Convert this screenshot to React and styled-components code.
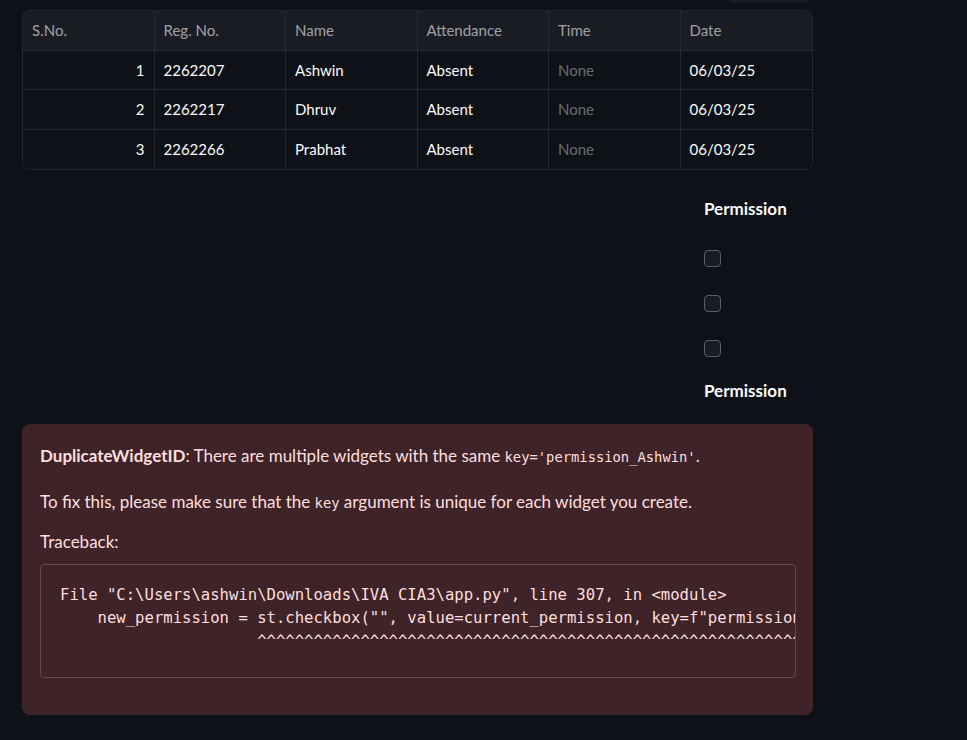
import React from "react";
import styled, { createGlobalStyle } from "styled-components";

const Global = createGlobalStyle`
  html, body { margin: 0; padding: 0; background: #0e1117; }
  body { font-family: Lato, "Noto Sans", sans-serif; color: #fafafa; }
`;

const Page = styled.div`
  width: 967px;
  height: 740px;
  overflow: hidden;
  background: #0e1117;
  padding: 10px 0 0 22px;
  box-sizing: border-box;
`;

const Main = styled.div`
  width: 791px;
  display: flex;
  flex-direction: column;
`;

const TableWrap = styled.div`
  position: relative;
`;

const Toolbar = styled.div`
  position: absolute;
  top: -37px;
  right: 2px;
  width: 85px;
  height: 30px;
  border-radius: 8px;
  background: #1a1c24;
`;

const Table = styled.div`
  display: grid;
  grid-template-columns: repeat(6, 1fr);
  grid-auto-rows: 39.5px;
  border: 1px solid #262730;
  border-radius: 8px;
  overflow: hidden;
  box-sizing: border-box;
  font-family: Lato, "Noto Sans", sans-serif;
  font-size: 15px;
`;

const Cell = styled.div`
  display: flex;
  align-items: center;
  justify-content: ${(p) => (p.$right ? "flex-end" : "flex-start")};
  padding: 0 9px;
  box-sizing: border-box;
  background: ${(p) => (p.$head ? "#1a1c24" : "#0e1117")};
  color: ${(p) =>
    p.$head ? "rgba(250,250,250,0.6)" : p.$muted ? "rgba(250,250,250,0.4)" : "#fafafa"};
  border-right: ${(p) => (p.$last ? "none" : "1px solid #262730")};
  border-bottom: ${(p) => (p.$bottom ? "none" : "1px solid #262730")};
`;

const PermRow = styled.div`
  display: flex;
  justify-content: flex-end;
  margin-top: 25px;
`;

const PermCol = styled.div`
  width: 109px;
  display: flex;
  flex-direction: column;
`;

const PermHead = styled.div`
  font-size: 17px;
  font-weight: 700;
  line-height: 28px;
  color: #fafafa;
`;

const Check = styled.div`
  width: 17px;
  height: 17px;
  box-sizing: border-box;
  border: 1px solid #5c5e66;
  border-radius: 4px;
  background: #1a1c24;
  margin-top: ${(p) => p.$mt}px;
`;

const PermHead2 = styled(PermHead)`
  margin-top: 20px;
`;

const ErrorBox = styled.div`
  margin-top: 19px;
  background: #3e2429;
  border-radius: 8px;
  padding: 18px 17px 37px 18px;
  color: #ffdede;
  font-family: Lato, "Noto Sans", sans-serif;
  font-size: 17px;
  line-height: 28px;
`;

const Para = styled.p`
  margin: 0 0 ${(p) => p.$mb}px 0;
`;

const Strong = styled.b`
  font-weight: 700;
`;

const InlineCode = styled.code`
  font-family: "DejaVu Sans Mono", monospace;
  font-size: 13.8px;
`;

const Pre = styled.pre`
  margin: 0;
  border: 1px solid #5e4a4e;
  border-radius: 4px;
  padding: 19px 0 25px 19px;
  height: 114px;
  box-sizing: border-box;
  overflow: hidden;
  white-space: pre;
  font-family: "DejaVu Sans Mono", monospace;
  font-size: 15.6px;
  line-height: 23px;
  color: #ffdede;
`;

const headers = ["S.No.", "Reg. No.", "Name", "Attendance", "Time", "Date"];
const rows = [
  ["1", "2262207", "Ashwin", "Absent", "None", "06/03/25"],
  ["2", "2262217", "Dhruv", "Absent", "None", "06/03/25"],
  ["3", "2262266", "Prabhat", "Absent", "None", "06/03/25"],
];

const code = `File "C:\\Users\\ashwin\\Downloads\\IVA CIA3\\app.py", line 307, in <module>
    new_permission = st.checkbox("", value=current_permission, key=f"permission_{row['Name']}")
                     ${"^".repeat(70)}`;

export default function App() {
  return (
    <>
      <Global />
      <Page>
        <Main>
          <TableWrap>
            <Toolbar />
            <Table>
              {headers.map((h, i) => (
                <Cell key={h} $head $last={i === 5}>
                  {h}
                </Cell>
              ))}
              {rows.map((r, ri) =>
                r.map((v, ci) => (
                  <Cell
                    key={ri + "-" + ci}
                    $right={ci === 0}
                    $muted={ci === 4}
                    $last={ci === 5}
                    $bottom={ri === rows.length - 1}
                  >
                    {v}
                  </Cell>
                ))
              )}
            </Table>
          </TableWrap>
          <PermRow>
            <PermCol>
              <PermHead>Permission</PermHead>
              <Check $mt={27} />
              <Check $mt={28} />
              <Check $mt={28} />
              <PermHead2>Permission</PermHead2>
            </PermCol>
          </PermRow>
          <ErrorBox>
            <Para $mb={17}>
              <Strong>DuplicateWidgetID</Strong>: There are multiple widgets with the same{" "}
              <InlineCode>key='permission_Ashwin'</InlineCode>.
            </Para>
            <Para $mb={11}>
              To fix this, please make sure that the <InlineCode>key</InlineCode> argument is
              unique for each widget you create.
            </Para>
            <Para $mb={8}>Traceback:</Para>
            <Pre>{code}</Pre>
          </ErrorBox>
        </Main>
      </Page>
    </>
  );
}
